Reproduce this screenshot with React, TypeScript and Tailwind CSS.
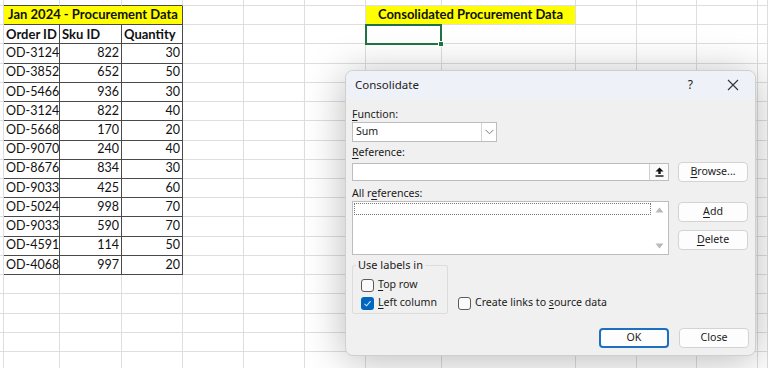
import React from 'react';

const COLS = [4, 56, 62, 61, 61, 61, 61, 76, 134, 61, 60, 61, 10];

const DATA: [string, number, number][] = [
  ['OD-3124', 822, 30],
  ['OD-3852', 652, 50],
  ['OD-5466', 936, 30],
  ['OD-3124', 822, 40],
  ['OD-5668', 170, 20],
  ['OD-9070', 240, 40],
  ['OD-8676', 834, 30],
  ['OD-9033', 425, 60],
  ['OD-5024', 998, 70],
  ['OD-9033', 590, 70],
  ['OD-4591', 114, 50],
  ['OD-4068', 997, 20],
];

const TOTAL_ROWS = 20;

function Cell({
  w,
  dark,
  darkBottom,
  className = '',
  children,
}: {
  w: number;
  dark?: boolean;
  darkBottom?: boolean;
  className?: string;
  children?: React.ReactNode;
}) {
  return (
    <div
      style={{ width: w }}
      className={
        'shrink-0 h-full border-r border-b flex items-center overflow-visible whitespace-nowrap ' +
        (dark ? 'border-r-[#4a4a4a] ' : 'border-r-[#dedede] ') +
        (dark || darkBottom ? 'border-b-[#4a4a4a] ' : 'border-b-[#dedede] ') +
        className
      }
    >
      {children}
    </div>
  );
}

function SheetRow({ r }: { r: number }) {
  const rest = (from: number) =>
    COLS.slice(from).map((w, i) => <Cell key={from + i} w={w} />);

  if (r === 0) {
    return (
      <div className="flex h-[6px]">
        <Cell w={COLS[0]} />
        <Cell w={COLS[1]} darkBottom />
        <Cell w={COLS[2]} darkBottom />
        <Cell w={COLS[3]} darkBottom />
        {rest(4)}
      </div>
    );
  }

  const inTable = r >= 1 && r <= 14;
  const left = (
    <Cell w={COLS[0]} className={inTable ? 'border-r-[#4a4a4a]' : ''} />
  );

  if (r === 1) {
    return (
      <div className="flex h-[19.22px]">
        {left}
        <Cell
          w={COLS[1] + COLS[2] + COLS[3]}
          dark
          className="justify-center bg-[#ffff00] font-bold"
        >
          Jan 2024 - Procurement Data
        </Cell>
        {COLS.slice(4, 7).map((w, i) => (
          <Cell key={i} w={w} />
        ))}
        <div
          style={{ width: COLS[7] + COLS[8] }}
          className="shrink-0 h-full border-r border-r-[#dedede] border-b border-b-[#dedede] flex items-center justify-center bg-[#ffff00] font-bold"
        >
          Consolidated Procurement Data
        </div>
        {rest(9)}
      </div>
    );
  }

  if (r === 2) {
    return (
      <div className="flex h-[19.22px]">
        {left}
        <Cell w={COLS[1]} dark className="pl-[2px] font-bold">
          Order ID
        </Cell>
        <Cell w={COLS[2]} dark className="pl-[2px] font-bold">
          Sku ID
        </Cell>
        <Cell w={COLS[3]} dark className="pl-[2px] font-bold">
          Quantity
        </Cell>
        {COLS.slice(4, 7).map((w, i) => (
          <Cell key={i} w={w} />
        ))}
        <Cell w={COLS[7]} className="relative">
          <div className="absolute -left-[1px] -top-[1px] w-[77px] h-[21px] border-2 border-[#217346]">
            <div className="absolute -right-[4px] -bottom-[4px] w-[6px] h-[6px] bg-[#217346] border border-white" />
          </div>
        </Cell>
        {rest(8)}
      </div>
    );
  }

  if (inTable) {
    const [id, sku, qty] = DATA[r - 3];
    return (
      <div className="flex h-[19.22px] text-[12.5px]">
        {left}
        <Cell w={COLS[1]} dark className="pl-[2px]">
          {id}
        </Cell>
        <Cell w={COLS[2]} dark className="justify-end pr-[2px]">
          {sku}
        </Cell>
        <Cell w={COLS[3]} dark className="justify-end pr-[2px]">
          {qty}
        </Cell>
        {rest(4)}
      </div>
    );
  }

  return (
    <div className="flex h-[19.22px]">
      {left}
      {rest(1)}
    </div>
  );
}

function Key({ children }: { children: React.ReactNode }) {
  return <span className="underline underline-offset-2">{children}</span>;
}

function Checkbox({ checked }: { checked?: boolean }) {
  return checked ? (
    <span className="w-[13px] h-[13px] rounded-[3px] bg-[#0067c0] flex items-center justify-center shrink-0">
      <svg width="9" height="9" viewBox="0 0 9 9" fill="none">
        <path d="M1.5 4.8 L3.6 6.8 L7.6 2.2" stroke="#cfe3f7" strokeWidth="1.1" />
      </svg>
    </span>
  ) : (
    <span className="w-[13px] h-[13px] rounded-[3px] border border-[#5b5b5b] bg-[#fafafa] shrink-0" />
  );
}

function Button({
  children,
  w,
  focused,
  className = '',
}: {
  children: React.ReactNode;
  w: number;
  focused?: boolean;
  className?: string;
}) {
  return (
    <div
      style={{ width: w }}
      className={
        'h-[20px] rounded-[4px] flex items-center justify-center bg-[#fdfdfd] ' +
        (focused
          ? 'border-2 border-[#1f6fc0] '
          : 'border border-[#d3d3d3] ') +
        className
      }
    >
      {children}
    </div>
  );
}

function Dialog() {
  return (
    <div className="absolute left-[345px] top-[70px] w-[411px] h-[286px] rounded-[8px] bg-[#f0f0f0] border border-[#cfcfcf] shadow-[0_4px_40px_rgba(0,0,0,0.28)] overflow-hidden font-['Noto_Sans',sans-serif] text-[10.6px] text-[#1b1b1b]">
      <div className="h-[28px] bg-[#eef2f8] flex items-center pl-[9px] pr-[14px]">
        <span className="text-[11.5px] text-[#222]">Consolidate</span>
        <span className="ml-auto text-[12px] mr-[34px]">?</span>
        <svg width="12" height="12" viewBox="0 0 12 12" className="mr-[2px]">
          <path d="M1 1 L11 11 M11 1 L1 11" stroke="#333" strokeWidth="1.1" />
        </svg>
      </div>

      <div className="px-[6px] flex flex-col">
        <div className="mt-[7px] h-[16px] leading-[16px]">
          <Key>F</Key>unction:
        </div>
        <div className="w-[145px] h-[20px] bg-white border border-[#bdbdbd] flex">
          <div className="flex-1 pl-[3px] flex items-center">Sum</div>
          <div className="w-[15px] border-l border-[#d3d3d3] flex items-center justify-center">
            <svg width="9" height="6" viewBox="0 0 9 6">
              <path d="M0.5 0.8 L4.5 4.8 L8.5 0.8" fill="none" stroke="#7a7a7a" strokeWidth="1" />
            </svg>
          </div>
        </div>

        <div className="mt-[2px] h-[16px] leading-[16px]">
          <Key>R</Key>eference:
        </div>
        <div className="mt-[2px] flex items-center h-[19px] gap-[9px]">
          <div className="w-[317px] h-[18px] bg-white border border-[#bdbdbd] flex justify-end">
            <div className="w-[19px] h-full border-l border-[#d0d0d0] bg-[#fafafa] flex items-center justify-center">
              <svg width="9" height="10" viewBox="0 0 9 10">
                <path d="M4.5 0.5 L8.5 4.5 L5.7 4.5 L5.7 7 L3.3 7 L3.3 4.5 L0.5 4.5 Z" fill="#111" />
                <rect x="0.5" y="8.3" width="8" height="1.4" fill="#111" />
              </svg>
            </div>
          </div>
          <Button w={70} className="h-[19px]">
            <span>
              <Key>B</Key>rowse...
            </span>
          </Button>
        </div>

        <div className="mt-[4px] h-[16px] leading-[16px]">
          All r<Key>e</Key>ferences:
        </div>
        <div className="flex gap-[9px]">
          <div className="w-[317px] h-[54px] bg-white border border-[#bdbdbd] flex">
            <div className="flex-1 pt-[1px] pl-[1px]">
              <div className="h-[12px] border border-dotted border-[#777]" />
            </div>
            <div className="w-[17px] flex flex-col items-center justify-between py-[5px]">
              <svg width="9" height="6" viewBox="0 0 9 6">
                <path d="M4.5 0.5 L8.5 5.5 L0.5 5.5 Z" fill="#b9b9b9" />
              </svg>
              <svg width="9" height="6" viewBox="0 0 9 6">
                <path d="M0.5 0.5 L8.5 0.5 L4.5 5.5 Z" fill="#b9b9b9" />
              </svg>
            </div>
          </div>
          <div className="flex flex-col">
            <Button w={70} className="mt-[1px]">
              <span>
                <Key>A</Key>dd
              </span>
            </Button>
            <Button w={70} className="mt-[8px]">
              <span>
                <Key>D</Key>elete
              </span>
            </Button>
          </div>
        </div>

        <div className="mt-[2px] flex items-end">
          <fieldset className="w-[96px] border border-[#dcdcdc] rounded-[2px] pl-[8px] pb-[2px]">
            <legend className="ml-[-5px] px-[2px] h-[16px] leading-[16px] text-[11px]">Use labels in</legend>
            <div className="mt-[4px] h-[16px] flex items-center gap-[4px]">
              <Checkbox />
              <span>
                <Key>T</Key>op row
              </span>
            </div>
            <div className="mt-[2px] h-[16px] flex items-center gap-[4px]">
              <Checkbox checked />
              <span>
                <Key>L</Key>eft column
              </span>
            </div>
          </fieldset>
          <div className="ml-[10px] mb-[3px] h-[16px] flex items-center gap-[4px]">
            <Checkbox />
            <span>
              Create links to <Key>s</Key>ource data
            </span>
          </div>
        </div>

        <div className="mt-[14px] flex justify-end gap-[10px]">
          <Button w={70} focused>
            OK
          </Button>
          <Button w={70}>Close</Button>
        </div>
      </div>
    </div>
  );
}

export default function App() {
  return (
    <div className="relative w-[768px] h-[368px] overflow-hidden bg-white font-['Lato',sans-serif] text-[13px] text-[#111]">
      {Array.from({ length: TOTAL_ROWS }, (_, r) => (
        <SheetRow key={r} r={r} />
      ))}
      <Dialog />
    </div>
  );
}
